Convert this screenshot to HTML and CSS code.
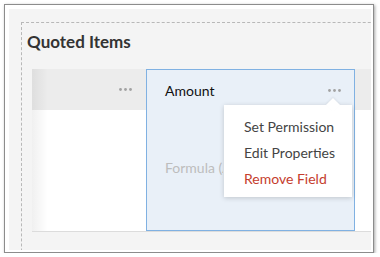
FILE: index.html
```html
<!DOCTYPE html>
<html lang="en">
<head>
    <meta charset="UTF-8">
    <meta name="viewport" content="width=device-width, initial-scale=1.0">
    <title>Quoted Items</title>
    <link rel="stylesheet" href="styles.css">
</head>
<body>
    <div class="frame">
        <div class="panel">
            <div class="section">
                <h2 class="section-title">Quoted Items</h2>
                <div class="table">
                    <!-- first column, no label -->
                    <div class="col col-first">
                        <div class="col-head">
                            <svg class="dots" width="13" height="3" viewBox="0 0 13 3"><circle cx="1.5" cy="1.5" r="1.4"/><circle cx="6.5" cy="1.5" r="1.4"/><circle cx="11.5" cy="1.5" r="1.4"/></svg>
                        </div>
                        <div class="col-body"></div>
                    </div>

                    <!-- selected column -->
                    <div class="col col-active">
                        <div class="col-head">
                            <span class="col-label">Amount</span>
                            <svg class="dots" width="13" height="3" viewBox="0 0 13 3"><circle cx="1.5" cy="1.5" r="1.4"/><circle cx="6.5" cy="1.5" r="1.4"/><circle cx="11.5" cy="1.5" r="1.4"/></svg>
                        </div>
                        <div class="col-body">
                            <span class="placeholder">Formula (Amount)</span>
                        </div>

                        <ul class="menu">
                            <li class="menu-item">Set Permission</li>
                            <li class="menu-item">Edit Properties</li>
                            <li class="menu-item danger">Remove Field</li>
                        </ul>
                    </div>

                    <div class="col col-rest">
                        <div class="col-head"></div>
                        <div class="col-body"></div>
                    </div>
                </div>
            </div>
        </div>
    </div>
</body>
</html>
```

FILE: styles.css
```css
body {
    margin: 0;
    background: #fff;
    font-family: Lato, "Open Sans", sans-serif;
}
.frame {
    margin: 4px 0 0 4px;
    width: 370px;
    height: 249px;
    box-sizing: border-box;
    border: 1px solid #8c8c8c;
    padding: 4px 2px 2px 4px;
    background: #fff;
    box-shadow: 1px 1px 3px rgba(0, 0, 0, 0.35);
}
.panel {
    height: 100%;
    background: #f4f4f4;
    overflow: hidden;
    padding: 13px 0 0 12px;
    box-sizing: border-box;
}
.section {
    width: 400px;
    height: 300px;
    border: 1px dashed #b8b8b8;
    padding: 9px 0 0 10px;
    box-sizing: border-box;
}
.section-title {
    margin: 0 0 17px -5px;
    font-size: 17px;
    line-height: 20px;
    font-weight: 700;
    color: #333;
}
.table {
    display: flex;
    height: 162px;
    border-bottom: 1px solid #dcdcdc;
}
.col {
    display: flex;
    flex-direction: column;
}
.col-head {
    height: 41px;
    display: flex;
    align-items: center;
    justify-content: flex-end;
    padding-right: 14px;
    background: #ececec;
}
.col-body {
    flex: 1;
    background: #fff;
}
.dots {
    fill: #a2a2a2;
}
.col-first {
    width: 114px;
}
.col-first .col-head,
.col-first .col-body {
    background-image: linear-gradient(to right, rgba(0, 0, 0, 0.06), rgba(0, 0, 0, 0) 16px);
}
.col-active {
    position: relative;
    width: 209px;
    box-sizing: border-box;
    border: 1px solid #80b1e2;
    background: #e9f0f8;
}
.col-active .col-head,
.col-active .col-body {
    background: none;
}
.col-active .col-head {
    height: 40px;
    justify-content: space-between;
    padding: 0 13px 0 18px;
}
.col-label {
    font-size: 14px;
    color: #111;
}
.col-active .col-body {
    padding: 49px 0 0 18px;
}
/* text runs under the menu, so cut it where the menu starts */
.placeholder {
    display: block;
    width: 58px;
    overflow: hidden;
    white-space: nowrap;
    font-size: 14px;
    color: #bdbdbd;
}
.col-rest {
    flex: 1;
}
.menu {
    position: absolute;
    left: 77px;
    top: 35px;
    width: 128px;
    margin: 0;
    padding: 9px 0 5px;
    list-style: none;
    background: #fff;
    box-shadow: 0 1px 5px rgba(0, 0, 0, 0.18);
}
.menu::before {
    content: "";
    position: absolute;
    top: -5px;
    left: 104px;
    width: 10px;
    height: 10px;
    background: #fff;
    transform: rotate(45deg);
    box-shadow: -1px -1px 2px rgba(0, 0, 0, 0.06);
}
.menu-item {
    position: relative;
    height: 26px;
    line-height: 26px;
    padding-left: 20px;
    font-size: 14px;
    color: #444;
}
.menu-item.danger {
    color: #c53d2d;
}
```
